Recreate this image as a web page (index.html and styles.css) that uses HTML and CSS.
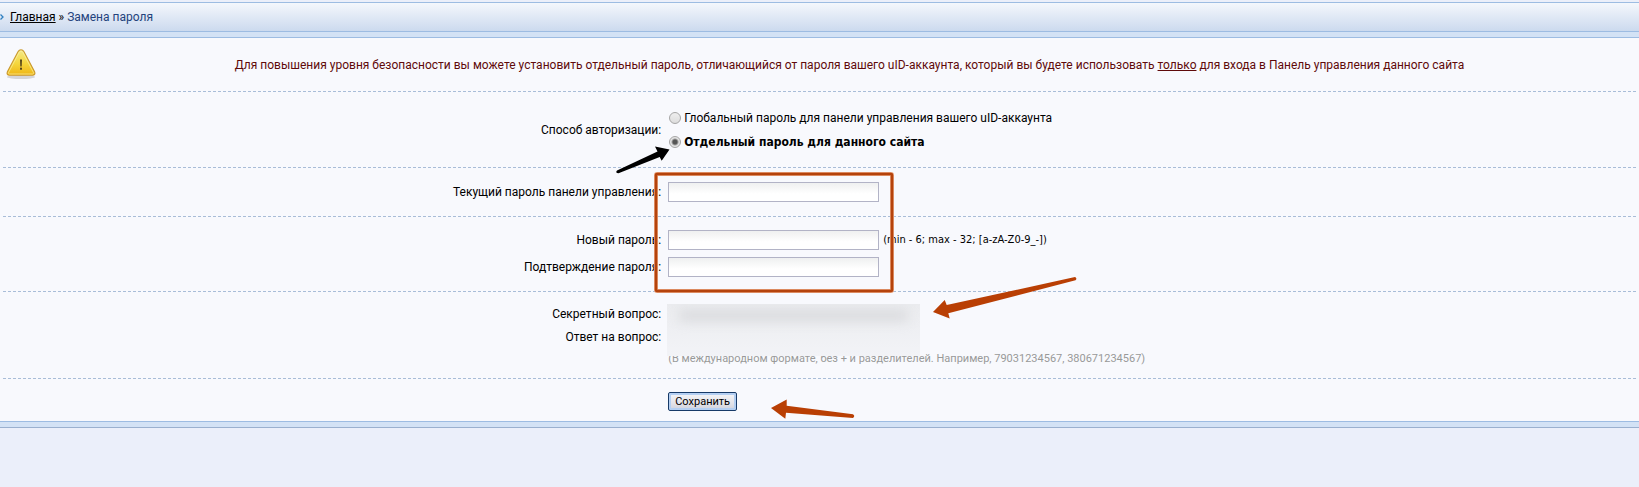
FILE: index.html
```html
<!DOCTYPE html>
<html lang="ru">
<head>
  <meta charset="UTF-8">
  <meta name="viewport" content="width=device-width, initial-scale=1.0">
  <title>Замена пароля</title>
  <link rel="stylesheet" href="styles.css">
</head>
<body>
  <nav class="crumbs">
    <svg class="crumbs-arrow" viewBox="0 0 4 6"><path d="M0.5 0.5L3 3L0.5 5.5" fill="none" stroke="#2f7fc0" stroke-width="1.3"/></svg>
    <span><a href="#">Главная</a> » <span class="current">Замена пароля</span></span>
  </nav>

  <main class="frame">
    <div class="panel">
      <div class="notice">
        <svg class="warning" viewBox="0 0 32 32">
          <defs>
            <linearGradient id="gold" x1="0" y1="0" x2="0" y2="1">
              <stop offset="0" stop-color="#f3e98a"/>
              <stop offset="0.55" stop-color="#f5d63c"/>
              <stop offset="1" stop-color="#efb414"/>
            </linearGradient>
          </defs>
          <ellipse cx="16" cy="28" rx="14" ry="2" fill="#000" opacity="0.14"/>
          <path d="M16 0.8C17.3 0.8 18.3 1.5 19 2.7L29.6 22.8C30.5 24.8 29.600 26.300 27.6 26.300H4.4C2.4 26.300 1.5 24.8 2.4 22.8L13 2.7C13.7 1.5 14.7 0.8 16 0.8Z" fill="url(#gold)" stroke="#c9982f" stroke-width="1.1"/>
          <path d="M16 2.2C16.8 2.2 17.4 2.7 17.9 3.5L28.3 23.2C28.8 24.4 28.4 25 27.4 25H4.6C3.6 25 3.2 24.4 3.7 23.2L14.1 3.5C14.6 2.7 15.2 2.2 16 2.2Z" fill="none" stroke="#fbf0a0" stroke-width="0.7"/>
          <path d="M15 10.500H17L16.700 17.500H15.300Z" fill="#55461a"/>
          <rect x="15" y="18.700" width="2" height="2" fill="#55461a"/>
        </svg>
        <p>Для повышения уровня безопасности вы можете установить отдельный пароль, отличающийся от пароля вашего uID-аккаунта, который вы будете использовать <u>только</u> для входа в Панель управления данного сайта</p>
      </div>

      <form class="form">
        <fieldset class="group group-auth">
          <div class="row">
            <span class="caption" id="auth">Способ авторизации:</span>
            <div class="radios" role="radiogroup" aria-labelledby="auth">
              <label><input type="radio" name="auth">Глобальный пароль для панели управления вашего uID-аккаунта</label>
              <label class="chosen"><input type="radio" name="auth" checked>Отдельный пароль для данного сайта</label>
            </div>
          </div>
        </fieldset>

        <fieldset class="group group-current">
          <div class="row">
            <label class="caption" for="current">Текущий пароль панели управления:</label>
            <div><input class="text" type="password" id="current"></div>
          </div>
        </fieldset>

        <fieldset class="group group-new">
          <div class="row">
            <label class="caption" for="new">Новый пароль:</label>
            <div class="field"><input class="text" type="password" id="new"><span class="hint">(min - 6; max - 32; [a-zA-Z0-9_-])</span></div>
          </div>
          <div class="row">
            <label class="caption" for="confirm">Подтверждение пароля:</label>
            <div><input class="text" type="password" id="confirm"></div>
          </div>
        </fieldset>

        <fieldset class="group group-secret">
          <div class="row">
            <span class="caption">Секретный вопрос:</span>
          </div>
          <div class="row">
            <span class="caption">Ответ на вопрос:</span>
          </div>
          <div class="row">
            <span></span>
            <p class="note">(В международном формате, без + и разделителей. Например, 79031234567, 380671234567)</p>
          </div>
          <div class="blurred"><div class="smudge"></div></div>
        </fieldset>

        <div class="group group-save">
          <div class="row">
            <span></span>
            <div><button class="save" type="submit">Сохранить</button></div>
          </div>
        </div>

        <!-- arrows and frame over the form -->
        <svg class="marks" viewBox="608 140 480 290">
          <path d="M617 170.500L657.500 151.500L655 146.500L669.500 149.500L661.700 160.700L659.700 157L618.500 173.300Q615 173 617 170.500Z" fill="#000"/>
          <rect x="656" y="174" width="236" height="117" rx="1" fill="none" stroke="#e8a27c" stroke-width="4"/>
          <rect x="656" y="174" width="236" height="117" rx="1" fill="none" stroke="#b5430c" stroke-width="2.500"/>
          <path d="M933 312L944.700 300L946.700 305L1075 277Q1077.500 278.300 1075.500 280.300L948.300 313.300L949.700 318.500Z" fill="#b93f04"/>
          <path d="M771 408L786.700 399.500L786.700 405.700L853 414.200Q855.500 416 853 418L786 412.700L785.300 418.700Z" fill="#b93f04"/>
        </svg>
      </form>
    </div>
  </main>
</body>
</html>
```
FILE: styles.css
```css
* {
  box-sizing: border-box;
}
body {
  margin: 0;
  padding-top: 2px;
  min-height: 100vh;
  background: #ebeffa;
  color: #000;
  font: 12px/16px Tahoma, Roboto, sans-serif;
}
p {
  margin: 0;
}
.crumbs {
  display: flex;
  align-items: center;
  gap: 6px;
  height: 30px;
  border-top: 1px solid #9dbce2;
  border-bottom: 1px solid #9dbce2;
  background: linear-gradient(#f4f7fc, #ccdaee);
}
.crumbs-arrow {
  width: 4px;
  height: 6px;
}
.crumbs a {
  color: #000;
}
.current {
  color: #24437c;
}
.frame {
  padding: 5px 0;
  border-bottom: 1px solid #9ab0cf;
  background: #d3e2f5;
}
.panel {
  border-top: 1px solid #9dbce2;
  border-bottom: 1px solid #9dbce2;
  background: #f8f9fd;
}
.notice {
  display: flex;
  align-items: center;
  height: 53px;
  padding-left: 5px;
}
.notice p {
  flex: 1;
  color: #5f0a0a;
  text-align: center;
}
.warning {
  width: 32px;
  height: 32px;
  margin-right: 23px;
}
.form {
  --label: calc(40% + 5px);
  position: relative;
  padding: 0 3px;
}
.group {
  position: relative;
  min-width: 0;
  margin: 0;
  border: 0;
  border-top: 1px dashed #a9bdd8;
}
.row {
  display: grid;
  grid-template-columns: var(--label) 1fr;
  column-gap: 7px;
  align-items: center;
}
.caption {
  text-align: right;
}
.group-auth {
  padding: 14px 0 13px;
}
.radios label {
  display: flex;
  align-items: center;
  gap: 3px;
  height: 24px;
}
.radios input {
  appearance: none;
  width: 12px;
  height: 12px;
  margin: 0 0 0 1px;
  border: 1px solid #a6a6a6;
  border-radius: 50%;
  background: linear-gradient(#eee, #ddd);
}
.radios input:checked {
  background: radial-gradient(circle, #555 2px, #e4e4e4 4px);
}
.chosen,
.hint {
  font-family: Tahoma, "DejaVu Sans Condensed", sans-serif;
}
.chosen {
  font-weight: bold;
}
.group-current {
  padding: 14px 0;
}
.text {
  display: block;
  width: 211px;
  height: 20px;
  padding: 2px;
  border: 1px solid #b2b3c6;
  background: linear-gradient(#eff0f0, #fff 60%);
}
.group-new {
  display: grid;
  gap: 7px;
  padding: 13px 0 14px;
}
.field {
  display: flex;
  align-items: center;
  gap: 4px;
}
.hint,
.note,
.save {
  font-size: 11px;
}
.group-secret {
  padding: 11px 0 9px;
}
.group-secret .row {
  height: 22px;
}
.group-secret .row:nth-child(2) {
  height: 23px;
}
.group-secret .row:nth-child(3) {
  height: 21px;
}
.note {
  color: #999;
}
.blurred {
  position: absolute;
  top: 12px;
  left: calc(var(--label) + 6px);
  width: 253px;
  height: 52px;
  padding: 6px 12px;
  overflow: hidden;
  background: linear-gradient(#ebecef, #f2f3f7);
}
.smudge {
  height: 11px;
  background: #d9dadd;
  filter: blur(6px);
}
.group-save {
  padding: 13px 0 10px;
}
.save {
  display: block;
  height: 19px;
  padding: 0 6px;
  border: 1px solid #173a68;
  border-radius: 2px;
  background: linear-gradient(#f6f6f8, #e3e3e9 60%, #cfd1dc);
  box-shadow: inset 0 0 0 2px #b4cff2;
  color: #000;
  font-family: inherit;
  line-height: 16px;
}
.marks {
  position: absolute;
  top: 49px;
  left: calc(var(--label) - 53px);
  width: 480px;
  height: 290px;
  pointer-events: none;
}
```
